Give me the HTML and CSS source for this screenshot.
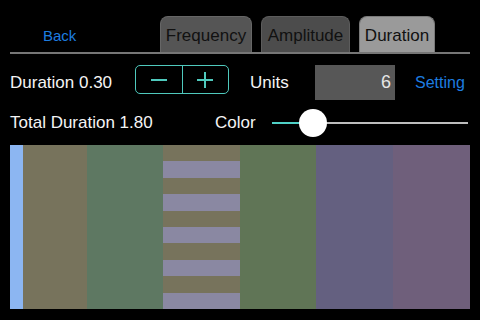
FILE: index.html
```html
<!DOCTYPE html>
<html lang="en">
<head>
  <meta charset="UTF-8">
  <title>Duration</title>
  <link rel="stylesheet" href="styles.css">
</head>
<body>
  <!-- Barra superior: volver y pestañas -->
  <div class="header">
    <a class="back">Back</a>
    <div class="tabs">
      <div class="tab tab-freq">Frequency</div>
      <div class="tab tab-amp">Amplitude</div>
      <div class="tab tab-dur">Duration</div>
    </div>
  </div>

  <!-- Duración y unidades -->
  <div class="row row-one">
    <div class="label label-dur">Duration 0.30</div>
    <div class="stepper">
      <div class="step">
        <svg width="16" height="2" viewBox="0 0 16 2"><line x1="0" y1="1" x2="16" y2="1" stroke="#4fc9bd" stroke-width="2"></line></svg>
      </div>
      <div class="step step-plus">
        <svg width="16" height="16" viewBox="0 0 16 16"><line x1="0" y1="8" x2="16" y2="8" stroke="#4fc9bd" stroke-width="2"></line><line x1="8" y1="0" x2="8" y2="16" stroke="#4fc9bd" stroke-width="2"></line></svg>
      </div>
    </div>
    <div class="label label-units">Units</div>
    <div class="units-box">6</div>
    <a class="setting">Setting</a>
  </div>

  <!-- Duración total y color -->
  <div class="row row-two">
    <div class="label label-total">Total Duration 1.80</div>
    <div class="label label-color">Color</div>
    <div class="slider">
      <div class="track-fill"></div>
      <div class="track-rest"></div>
      <div class="thumb"></div>
    </div>
  </div>

  <!-- Franjas de color -->
  <div class="bands">
    <div class="band blue"></div>
    <div class="band olive"></div>
    <div class="band green"></div>
    <div class="band striped">
      <div></div><div></div><div></div><div></div><div></div>
      <div></div><div></div><div></div><div></div><div></div>
    </div>
    <div class="band green2"></div>
    <div class="band purple"></div>
    <div class="band mauve"></div>
  </div>
</body>
</html>
```

FILE: styles.css
```css
body {
  margin: 0;
  width: 480px;
  height: 320px;
  overflow: hidden;
  background: #000;
  font-family: "Liberation Sans", Arial, sans-serif;
  color: #f4f4f4;
}

/* Barra superior */
.header {
  display: flex;
  align-items: flex-end;
  margin: 0 10px;
  height: 52px;
  border-bottom: 2px solid #767676;
}
.back {
  width: 117px;
  padding-left: 33px;
  align-self: center;
  margin-top: 18px;
  font-size: 15px;
  color: #1d7de0;
}
.tabs {
  display: flex;
  gap: 9px;
}
.tab {
  height: 36px;
  box-sizing: border-box;
  border: 1px solid #666;
  border-bottom: none;
  border-radius: 8px 8px 0 0;
  font-size: 17px;
  color: #111;
  text-align: center;
  line-height: 38px;
}
.tab-freq {
  width: 92px;
  background: #555;
}
.tab-amp {
  width: 89px;
  background: #4c4c4c;
  border-color: #5c5c5c;
}
.tab-dur {
  width: 76px;
  background: #9a9a9a;
  border-color: #7a7a7a;
}

/* Filas de controles */
.row {
  display: flex;
  align-items: center;
  padding-left: 10px;
}
.row-one {
  margin-top: 11px;
  height: 35px;
}
.row-two {
  margin-top: 9px;
  height: 28px;
}
.label {
  font-size: 17px;
}
.label-dur {
  width: 125px;
}
.stepper {
  display: flex;
  align-self: flex-start;
  width: 94px;
  height: 29px;
  box-sizing: border-box;
  border: 1px solid #4fc9bd;
  border-radius: 5px;
}
.step {
  flex: 1;
  display: flex;
  align-items: center;
  justify-content: center;
}
.step-plus {
  border-left: 1px solid #4fc9bd;
}
.label-units {
  margin-left: 21px;
  width: 65px;
}
.units-box {
  width: 80px;
  height: 35px;
  box-sizing: border-box;
  padding-right: 4px;
  background: #575757;
  color: #e6e6e6;
  font-size: 18px;
  line-height: 35px;
  text-align: right;
}
.setting {
  margin-left: 20px;
  font-size: 16px;
  color: #1d7de0;
}
.label-total {
  width: 205px;
}
.label-color {
  width: 57px;
}

/* Deslizador */
.slider {
  position: relative;
  display: flex;
  align-items: center;
  width: 196px;
  height: 28px;
}
.track-fill {
  width: 30px;
  height: 2px;
  background: #4fd0c6;
}
.track-rest {
  flex: 1;
  height: 2px;
  background: #bdbdbd;
}
.thumb {
  position: absolute;
  left: 27px;
  top: 0;
  width: 28px;
  height: 28px;
  border-radius: 50%;
  background: #fff;
}

/* Franjas */
.bands {
  display: grid;
  grid-template-columns: 13px 64px 76px 77px 76px 77px 77px;
  margin: 8px 10px 0;
  height: 164px;
}
.blue { background: #8cb6f2; }
.olive { background: #77735c; }
.green { background: #5e7862; }
.green2 { background: #607556; }
.purple { background: #646080; }
.mauve { background: #6f5f7b; }
.striped {
  display: flex;
  flex-direction: column;
}
.striped div {
  flex: 1;
  background: #77735c;
}
.striped div:nth-child(even) {
  background: #8a88a2;
}
```
